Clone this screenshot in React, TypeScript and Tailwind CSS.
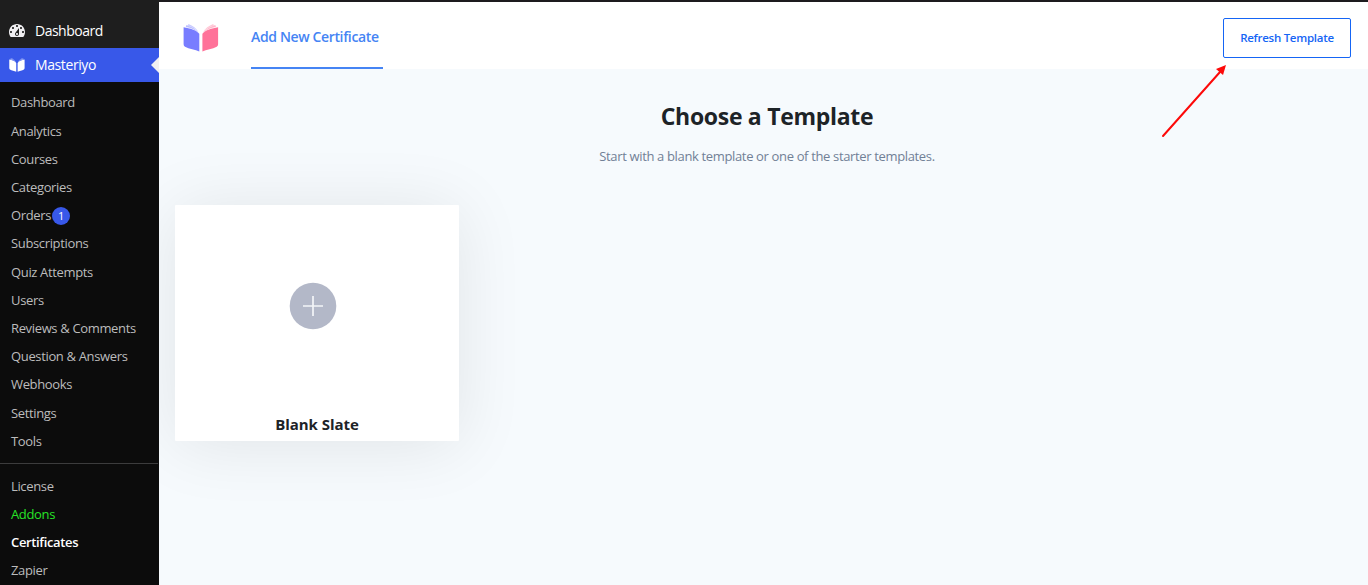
const MENU = [
  "Dashboard", "Analytics", "Courses", "Categories", "Orders", "Subscriptions", "Quiz Attempts",
  "Users", "Reviews & Comments", "Question & Answers", "Webhooks", "Settings", "Tools",
];

const EXTRA = [
  { label: "License", style: "text-[#bcbcbd]" },
  { label: "Addons", style: "text-[#27e527]" },
  { label: "Certificates", style: "font-semibold text-white" },
  { label: "Zapier", style: "text-[#bcbcbd]" },
];

function GaugeIcon() {
  return (
    <svg viewBox="0 0 20 20" className="size-5 shrink-0" fill="#f0eff2">
      <path d="M3.76 16h12.48c1.1-1.37 1.76-3.11 1.76-5 0-4.42-3.58-8-8-8s-8 3.58-8 8c0 1.89.66 3.63 1.76 5zM10 4c.55 0 1 .45 1 1s-.45 1-1 1-1-.45-1-1 .45-1 1-1zM6 6c.55 0 1 .45 1 1s-.45 1-1 1-1-.45-1-1 .45-1 1-1zm8 0c.55 0 1 .45 1 1s-.45 1-1 1-1-.45-1-1 .45-1 1-1zm-5.37 5.55L12 7v6c0 1.1-.9 2-2 2s-2-.9-2-2c0-.57.24-1.08.63-1.45zM4 10c.55 0 1 .45 1 1s-.45 1-1 1-1-.45-1-1 .45-1 1-1zm12 0c.55 0 1 .45 1 1s-.45 1-1 1-1-.45-1-1 .45-1 1-1zm-5 3c0-.55-.45-1-1-1s-1 .45-1 1 .45 1 1 1 1-.45 1-1z" />
    </svg>
  );
}

function BookIcon({ className, left, right }: { className: string; left: string; right: string }) {
  return (
    <svg viewBox="0 0 36 28" preserveAspectRatio="none" className={className}>
      <g fill={left}>
        <path d="M.6 3.200C7 4.200 13 6 16.300 9.800V27.400C12.500 26 6 25 2 22.800Q.6 22 .6 20.200Z" />
        <path d="M2.800 3 3.400.9C8.500 2.500 13.500 5.500 15.800 9 12.500 5.800 7.500 3.700 2.800 3Z" opacity=".5" />
        <path d="M4.800 1.500 5.500 0C9.800 1.500 13.600 4.600 15.500 8 12.800 5 8.800 2.600 4.800 1.500Z" opacity=".4" />
      </g>
      <g fill={right}>
        <path d="M35.100 3.200C28.700 4.200 22.700 6 19.400 9.800V27.400C23.200 26 29.700 25 33.700 22.800Q35.100 22 35.100 20.200Z" />
        <path d="M32.900 3 32.300.9C27.200 2.500 22.200 5.500 19.900 9 23.200 5.800 28.200 3.700 32.900 3Z" opacity=".5" />
        <path d="M30.900 1.500 30.200 0C25.900 1.500 22.100 4.600 20.200 8 22.900 5 26.900 2.600 30.900 1.500Z" opacity=".4" />
      </g>
    </svg>
  );
}

function Sidebar() {
  return (
    <aside className="flex h-full w-[159px] shrink-0 flex-col bg-[#0c0c0c] text-[13px] tracking-[-0.35px] text-[#bcbcbd]">
      <div className="flex h-12 shrink-0 items-center gap-2 bg-[#1e1e1e] pt-[14px] pl-[7px] text-sm tracking-[-0.5px] text-white">
        <GaugeIcon />
        <span>Dashboard</span>
      </div>
      <div className="relative flex h-[34px] shrink-0 items-center bg-[#3858e9] pl-[9px] text-sm tracking-[-0.4px] text-white">
        <BookIcon className="mr-[10px] h-[14px] w-4" left="#fff" right="#fff" />
        <span>Masteriyo</span>
        <span className="absolute top-[9px] right-0 border-y-8 border-r-8 border-y-transparent border-r-[#f0f0f1]" />
      </div>
      <nav className="shrink-0 pt-[6.850px]">
        {MENU.map((label) => (
          <a key={label} className="flex h-[28.190px] items-center pl-[11px] leading-none">
            {label}
            {label === "Orders" && (
              <span className="ml-px flex size-[18px] items-center justify-center rounded-full bg-[#3858e9] text-[11px] text-white">1</span>
            )}
          </a>
        ))}
      </nav>
      <div className="mt-[7.650px] mr-px h-px shrink-0 bg-[#3c3c3d]" />
      <nav className="shrink-0 pt-2">
        {EXTRA.map(({ label, style }) => (
          <a key={label} className={`flex h-[28.190px] items-center pl-[11px] leading-none ${style}`}>
            {label}
          </a>
        ))}
      </nav>
    </aside>
  );
}

export default function App() {
  return (
    <div className="relative flex h-[585px] w-[1368px] overflow-hidden bg-[#f6fafd] font-['Open_Sans','Noto_Sans',sans-serif]">
      <Sidebar />
      <main className="flex min-w-0 flex-1 flex-col overflow-hidden">
        <header className="flex h-[69px] shrink-0 items-stretch border-t-2 border-[#1d1b1e] bg-white pr-[17px] pl-6">
          <BookIcon className="mt-[22px] h-7 w-9" left="#787dff" right="#ff7299" />
          <div className="ml-8 flex w-[132px] items-center border-b-2 border-[#4584f4] pt-1 text-sm font-semibold tracking-[-0.36px] whitespace-nowrap text-[#4584f4]">
            Add New Certificate
          </div>
          <button className="mt-4 ml-auto h-10 w-32 rounded-[2px] border border-[#1565f5] pb-px text-[11.5px] font-semibold tracking-[-0.27px] whitespace-nowrap text-[#1565f5]">
            Refresh Template
          </button>
        </header>
        <section className="flex flex-1 flex-col pl-[7px]">
          <h1 className="mt-[31px] text-center text-[23px] leading-8 font-bold tracking-[-0.3px] text-[#1d2327]">Choose a Template</h1>
          <p className="mt-[14px] text-center text-[13px] leading-5 tracking-[-0.35px] text-[#718096]">
            Start with a blank template or one of the starter templates.
          </p>
          <article className="mt-[39px] ml-[9px] flex h-[236px] w-[284px] flex-col rounded-[1px] bg-white shadow-[0_4px_68px_rgba(0,0,0,0.09)]">
            <svg viewBox="0 0 48 48" className="mt-[77px] ml-[114px] size-12" fill="none">
              <circle cx="24" cy="24" r="23.300" fill="#b3b8c8" />
              <path d="M24 14v20M14 24h20" stroke="#f4f5f8" strokeWidth="1.700" />
            </svg>
            <h2 className="mt-[82px] text-center text-[15px] leading-6 font-bold tracking-[-0.05px] text-[#1d2327]">Blank Slate</h2>
          </article>
        </section>
      </main>
      <svg viewBox="0 0 70 78" className="absolute top-[62px] left-[1159px] h-[78px] w-[70px]">
        <path d="M4 74 61 10" stroke="#fd0909" strokeWidth="2" strokeLinecap="round" />
        <path d="M67 3 64 13 57 7Z" fill="#fd0909" />
      </svg>
    </div>
  );
}
